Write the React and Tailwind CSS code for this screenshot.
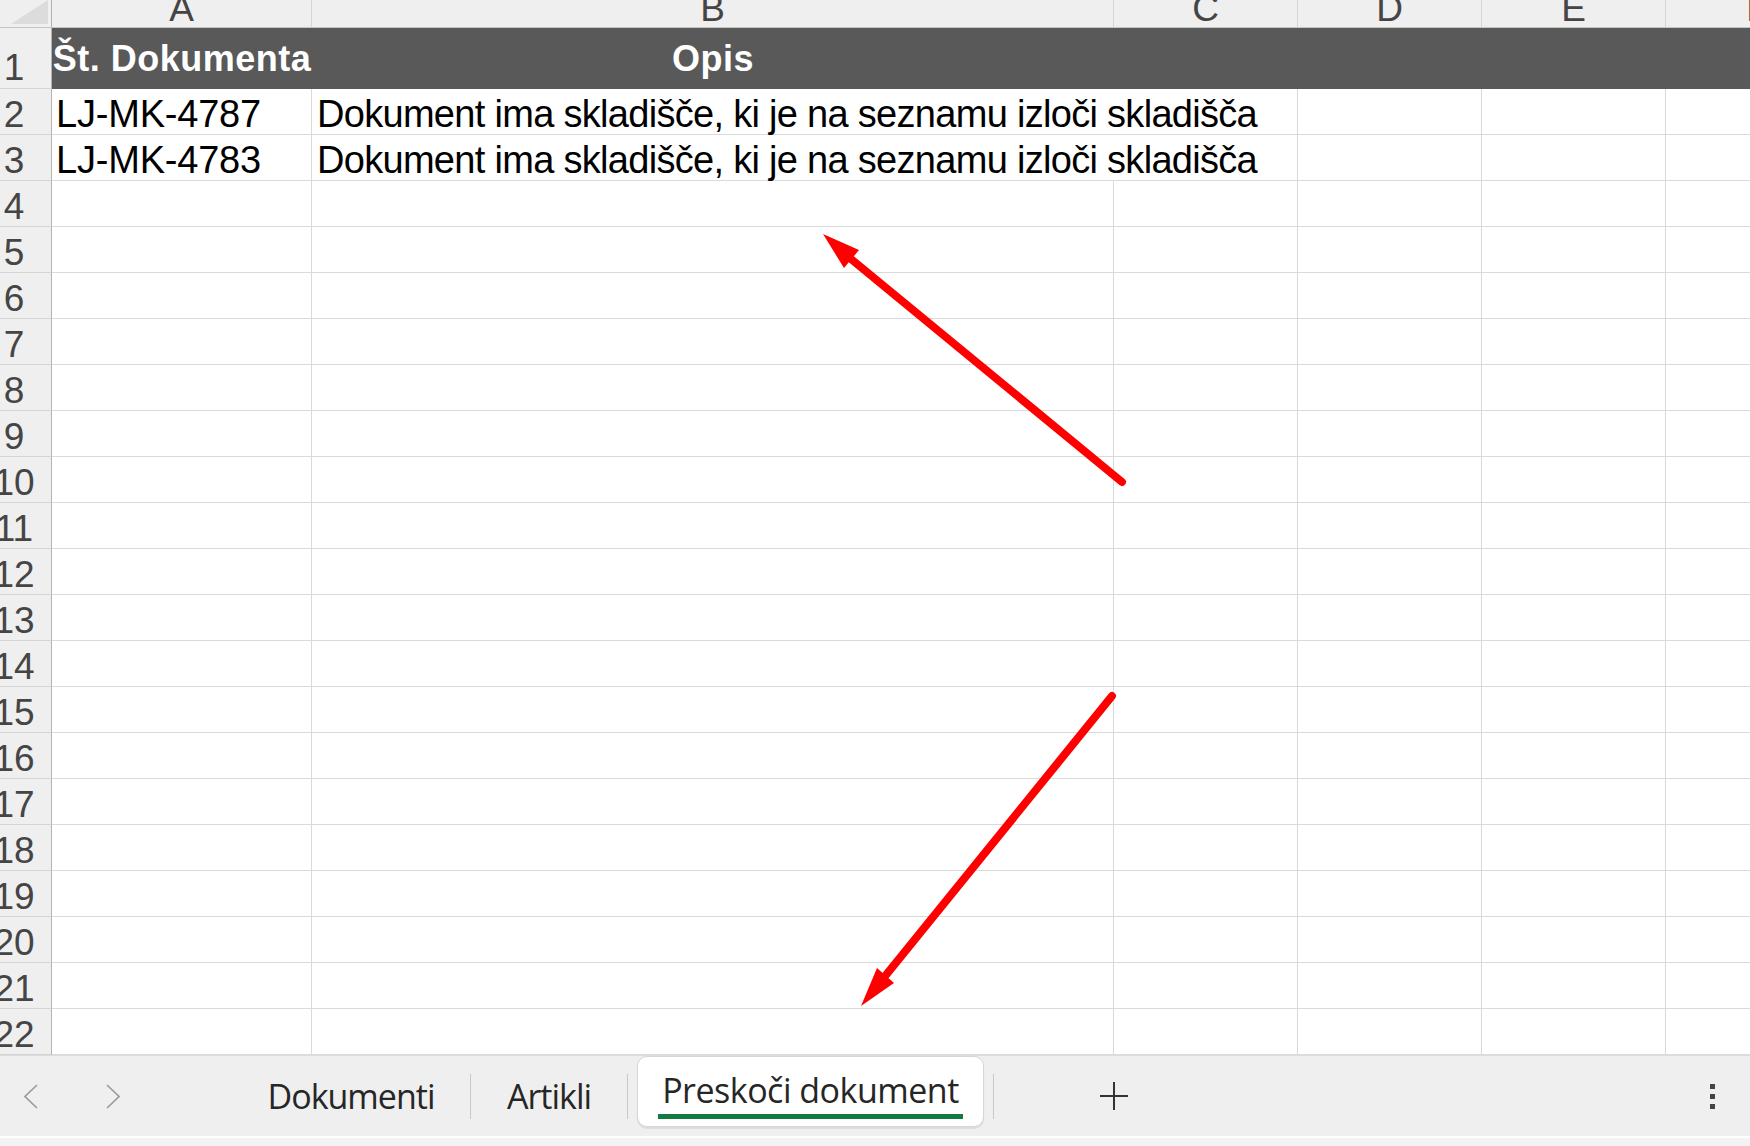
import React from 'react';

const OPIS = 'Dokument ima skladišče, ki je na seznamu izloči skladišča';

// vrstice z vsebino, ostale so prazne
const data = {
  2: ['LJ-MK-4787', OPIS],
  3: ['LJ-MK-4783', OPIS],
};

function RowNumber({ n, tall }) {
  return (
    <div
      className={`w-[52px] shrink-0 flex items-end justify-start overflow-hidden bg-[#efefef] border-r border-b border-r-[#b3b3b3] border-b-[#d4d4d4] ${tall ? 'pb-[2px]' : 'pb-[1px]'}`}
    >
      <span className="w-[72px] -ml-[22px] shrink-0 text-center text-[37px] leading-none text-[#454545]">{n}</span>
    </div>
  );
}

function SheetRow({ n }) {
  const row = data[n];
  return (
    <div className="flex h-[46px] shrink-0">
      <RowNumber n={n} />
      <div className="w-[260px] shrink-0 flex items-end pl-[4px] pb-[1px] border-r border-b border-[#dadada]">
        {row && <span className="text-[38px] leading-none tracking-[-0.2px] whitespace-nowrap text-black">{row[0]}</span>}
      </div>
      <div
        className={`w-[802px] shrink-0 flex items-end pl-[5px] pb-[1px] border-b border-[#dadada] ${row ? '' : 'border-r'}`}
      >
        {row && <span className="text-[38px] leading-none tracking-[-0.7px] whitespace-nowrap text-black">{row[1]}</span>}
      </div>
      <div className="w-[184px] shrink-0 border-r border-b border-[#dadada]" />
      <div className="w-[184px] shrink-0 border-r border-b border-[#dadada]" />
      <div className="w-[184px] shrink-0 border-r border-b border-[#dadada]" />
      <div className="w-[184px] shrink-0 border-r border-b border-[#dadada]" />
    </div>
  );
}

function ColumnHeader() {
  const cols = [
    ['A', 'w-[260px]'],
    ['B', 'w-[802px]'],
    ['C', 'w-[184px]'],
    ['D', 'w-[184px]'],
    ['E', 'w-[184px]'],
    ['F', 'w-[184px]'],
  ];
  return (
    <div className="flex h-[28px] shrink-0 bg-[#efefef] border-b border-[#c4c4c4]">
      <div className="w-[52px] shrink-0 relative border-r border-[#b3b3b3]">
        <svg className="absolute inset-0" width="51" height="27" viewBox="0 0 51 27">
          <polygon points="11,24 48,24 48,0" fill="#dcdcdc" />
        </svg>
      </div>
      {cols.map(([l, cls]) => (
        <div key={l} className={`${cls} shrink-0 flex items-end justify-center overflow-hidden border-r border-[#d6d6d6]`}>
          <span className="text-[37px] leading-none text-[#454545]">{l}</span>
        </div>
      ))}
    </div>
  );
}

function Chevron({ dir }) {
  return (
    <svg width="14" height="25" viewBox="0 0 14 25" className="shrink-0">
      <polyline
        points={dir === 'left' ? '13,1 1,12.5 13,24' : '1,1 13,12.5 1,24'}
        fill="none"
        stroke="#9a9a9a"
        strokeWidth="1.6"
      />
    </svg>
  );
}

function Divider() {
  return <div className="w-px h-[45px] shrink-0 bg-[#c8c8c8]" />;
}

function SheetTabs() {
  return (
    <div className="h-[81px] shrink-0 flex items-center bg-[#efefef] border-t border-[#dcdcdc] font-['Open_Sans',sans-serif] text-[#262626]">
      <div className="ml-[24px]">
        <Chevron dir="left" />
      </div>
      <div className="ml-[68px]">
        <Chevron dir="right" />
      </div>
      <div className="ml-[112px] w-[238px] shrink-0 flex justify-center">
        <span className="text-[34px] leading-none tracking-[-1px]">Dokumenti</span>
      </div>
      <Divider />
      <div className="w-[156px] shrink-0 flex justify-center">
        <span className="text-[34px] leading-none tracking-[-1px]">Artikli</span>
      </div>
      <Divider />
      <div className="self-stretch shrink-0 flex items-start px-[9px]">
        <div className="w-[347px] h-[71px] flex flex-col items-center pt-[16px] bg-white rounded-[10px] border border-[#d6d6d6] shadow-[0_2px_1px_rgba(0,0,0,0.08)]">
          <span className="text-[34px] leading-none tracking-[-0.5px] whitespace-nowrap">Preskoči dokument</span>
          <div className="mt-[7px] w-[305px] h-[5px] bg-[#107c41]" />
        </div>
      </div>
      <Divider />
      <div className="w-[240px] shrink-0 flex justify-center">
        <svg width="30" height="30" viewBox="0 0 30 30">
          <path d="M15 1V29M1 15H29" stroke="#333" strokeWidth="2" />
        </svg>
      </div>
      <div className="ml-auto mr-[35px] flex flex-col gap-[5px]">
        <div className="w-[5px] h-[5px] bg-[#444]" />
        <div className="w-[5px] h-[5px] bg-[#444]" />
        <div className="w-[5px] h-[5px] bg-[#444]" />
      </div>
    </div>
  );
}

export default function App() {
  const rows = Array.from({ length: 21 }, (_, i) => i + 2);

  return (
    <div className="relative w-[1750px] h-[1146px] overflow-hidden bg-white flex flex-col font-['Liberation_Sans',Arial,sans-serif]">
      <ColumnHeader />

      {/* glava tabele */}
      <div className="flex h-[61px] shrink-0">
        <RowNumber n={1} tall />
        <div className="flex-1 flex bg-[#595959] text-white font-bold">
          <div className="w-[260px] shrink-0 flex items-center justify-center">
            <span className="text-[36px] leading-none tracking-[0.5px] whitespace-nowrap">Št. Dokumenta</span>
          </div>
          <div className="w-[802px] shrink-0 flex items-center justify-center">
            <span className="text-[36px] leading-none tracking-[0.5px]">Opis</span>
          </div>
        </div>
      </div>

      {rows.map((n) => (
        <SheetRow key={n} n={n} />
      ))}

      <SheetTabs />
      <div className="h-[2px] shrink-0 bg-white" />
      <div className="h-[8px] shrink-0 bg-[#f3f3f3]" />

      {/* puščici */}
      <svg
        className="absolute inset-0 pointer-events-none"
        width="1750"
        height="1146"
        viewBox="0 0 1750 1146"
      >
        <line x1="1122" y1="482" x2="851" y2="259" stroke="#ff0000" strokeWidth="8" strokeLinecap="round" />
        <polygon points="823,234 859,250 844,268" fill="#ff0000" />
        <line x1="1112" y1="696" x2="886" y2="975" stroke="#ff0000" strokeWidth="8" strokeLinecap="round" />
        <polygon points="861,1006 877,968 894,983" fill="#ff0000" />
      </svg>
    </div>
  );
}
